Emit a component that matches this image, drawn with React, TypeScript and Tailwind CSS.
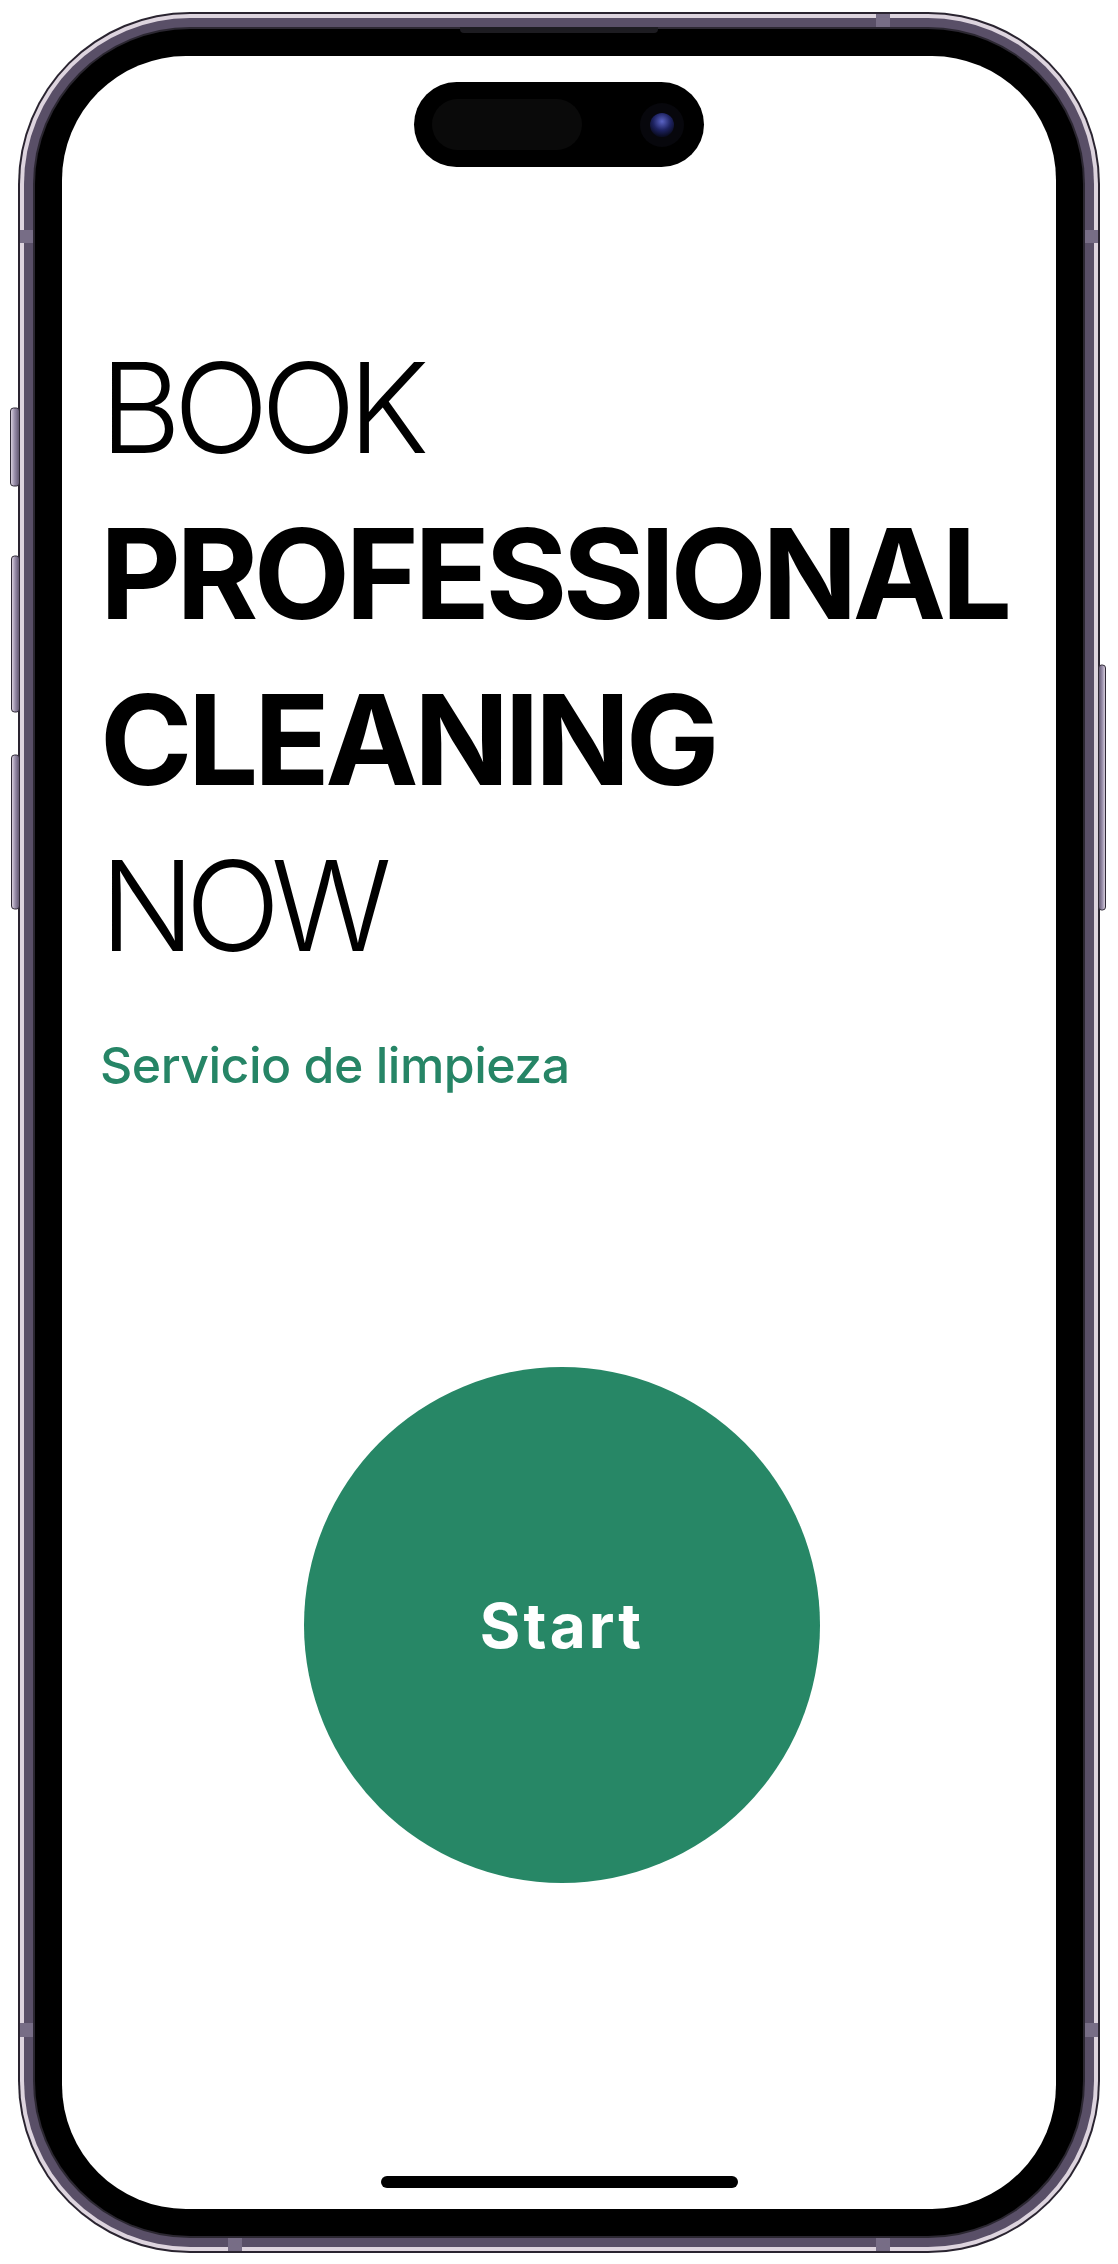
import React from "react";

const font = "font-['Inter','Liberation_Sans',sans-serif]";

// side keys, antenna lines and the earpiece slot, drawn in page coordinates
const DeviceDetails = () => (
  <svg
    className="pointer-events-none absolute inset-0"
    width="1118"
    height="2264"
    viewBox="0 0 1118 2264"
  >
    <defs>
      <linearGradient id="keyL" x1="0" x2="1" y1="0" y2="0">
        <stop offset="0" stopColor="#e0d8e3" />
        <stop offset="0.45" stopColor="#9a8fab" />
        <stop offset="1" stopColor="#5b5169" />
      </linearGradient>
      <linearGradient id="keyR" x1="1" x2="0" y1="0" y2="0">
        <stop offset="0" stopColor="#e0d8e3" />
        <stop offset="0.45" stopColor="#9a8fab" />
        <stop offset="1" stopColor="#5b5169" />
      </linearGradient>
    </defs>
    <g stroke="#2f2935" strokeWidth="1">
      <rect x="10.5" y="408" width="9" height="78" rx="3" fill="url(#keyL)" />
      <rect x="11.5" y="556" width="8" height="156" rx="3" fill="url(#keyL)" />
      <rect x="11.5" y="755" width="8" height="154" rx="3" fill="url(#keyL)" />
      <rect x="1098.5" y="665" width="7" height="245" rx="3" fill="url(#keyR)" />
    </g>
    <g fill="#776d86">
      <rect x="20" y="230" width="13" height="13" />
      <rect x="20" y="2023" width="13" height="14" />
      <rect x="1085" y="230" width="13" height="13" />
      <rect x="1085" y="2023" width="13" height="14" />
      <rect x="228" y="2238" width="14" height="13" />
      <rect x="876" y="2238" width="14" height="13" />
      <rect x="876" y="14" width="14" height="13" />
    </g>
    <path d="M460 27 H658 V29 a4 4 0 0 1 -4 4 H464 a4 4 0 0 1 -4 -4 Z" fill="#1d1c21" />
  </svg>
);

const DynamicIsland = () => (
  <div className="mx-auto mt-[26px] flex h-[85px] w-[290px] shrink-0 items-center rounded-full bg-black pl-[18px] pr-[20px]">
    <div className="h-[51px] w-[150px] rounded-full bg-[#0a0a0a]" />
    <div className="ml-auto flex h-[44px] w-[44px] items-center justify-center rounded-full bg-[#07070c]">
      <div className="h-[24px] w-[24px] rounded-full bg-[radial-gradient(circle_at_50%_35%,#5a63c4_0%,#1d2260_45%,#0b0d24_75%)]" />
    </div>
  </div>
);

const Screen = () => (
  <div className="flex h-full w-full flex-col overflow-hidden rounded-[124px] bg-white">
    <DynamicIsland />

    {/* Headline */}
    <div className={`mt-[158px] pl-[38px] ${font} text-[125px] leading-[166px] text-black`}>
      <div className="font-light tracking-[-0.06em]">BOOK</div>
      <div className="font-bold tracking-[-0.037em]">PROFESSIONAL</div>
      <div className="font-bold tracking-[-0.037em]">CLEANING</div>
      <div className="font-light tracking-[-0.075em]">NOW</div>
    </div>

    <p className={`mt-[46px] pl-[38px] ${font} text-[50px] font-medium leading-[60px] tracking-[-0.01em] text-[#268566]`}>
      Servicio de limpieza
    </p>

    <button className={`mx-auto mt-[272px] flex h-[516px] w-[516px] shrink-0 translate-x-[3px] items-center justify-center rounded-full bg-[#278766] ${font} text-[62px] font-bold tracking-[0.05em] text-white`}>
      Start
    </button>

    {/* home indicator */}
    <div className="mx-auto mb-[21px] mt-auto h-[12px] w-[357px] rounded-full bg-black" />
  </div>
);

export default function App() {
  return (
    <div className="relative h-[2264px] w-[1118px] bg-white pl-[18px] pt-[12px]">
      {/* frame */}
      <div className="h-[2241px] w-[1082px] rounded-[172px] bg-[#2a2430] p-[2px]">
        <div className="h-full w-full rounded-[170px] bg-[#ddd4de] p-[4px]">
          <div className="h-full w-full rounded-[166px] bg-[#594f67] p-[9px]">
            <div className="h-full w-full rounded-[157px] bg-[#2b2731] p-[2px]">
              <div className="h-full w-full rounded-[155px] bg-black p-[27px]">
                <Screen />
              </div>
            </div>
          </div>
        </div>
      </div>
      <DeviceDetails />
    </div>
  );
}
